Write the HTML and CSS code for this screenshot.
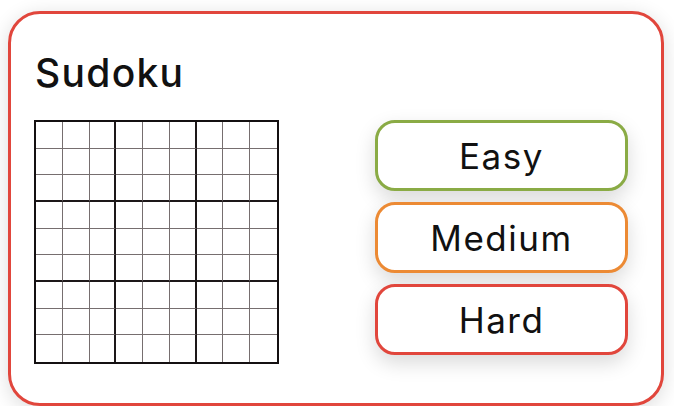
FILE: index.html
```html
<!DOCTYPE html>
<html>
<head>
<meta charset="utf-8">
<link rel="stylesheet" href="styles.css">
</head>
<body>
<div class="card">
  <h1 class="title">Sudoku</h1>
  <div class="content">
    <div class="board" id="board">
      <div></div><div></div><div></div><div></div><div></div><div></div><div></div><div></div><div></div>
      <div></div><div></div><div></div><div></div><div></div><div></div><div></div><div></div><div></div>
      <div></div><div></div><div></div><div></div><div></div><div></div><div></div><div></div><div></div>
      <div></div><div></div><div></div><div></div><div></div><div></div><div></div><div></div><div></div>
      <div></div><div></div><div></div><div></div><div></div><div></div><div></div><div></div><div></div>
      <div></div><div></div><div></div><div></div><div></div><div></div><div></div><div></div><div></div>
      <div></div><div></div><div></div><div></div><div></div><div></div><div></div><div></div><div></div>
      <div></div><div></div><div></div><div></div><div></div><div></div><div></div><div></div><div></div>
      <div></div><div></div><div></div><div></div><div></div><div></div><div></div><div></div><div></div>
    </div>
    <div class="levels">
      <button class="level easy">Easy</button>
      <button class="level medium">Medium</button>
      <button class="level hard">Hard</button>
    </div>
  </div>
</div>
</body>
</html>
```

FILE: styles.css
```css
html, body {
  margin: 0;
  padding: 0;
  background: #ffffff;
}

body {
  font-family: Inter, "Noto Sans", sans-serif;
  color: #111111;
}

.card {
  box-sizing: border-box;
  width: 656px;
  height: 395px;
  margin: 11px 0 0 8px;
  border: 3px solid #e1463c;
  border-radius: 32px;
  background: #ffffff;
  box-shadow: 0 4px 20px rgba(0, 0, 0, 0.14);
  padding: 35px 33px 0 23px;
}

.title {
  margin: 0;
  font-size: 39px;
  line-height: 48px;
  font-weight: 500;
  letter-spacing: 1.3px;
  padding-left: 1px;
}

.content {
  display: flex;
  justify-content: space-between;
  align-items: flex-start;
  margin-top: 23px;
}

.board {
  box-sizing: border-box;
  width: 245px;
  height: 244px;
  border: 2px solid #141011;
  display: grid;
  grid-template-columns: repeat(9, 1fr);
  grid-template-rows: repeat(9, 1fr);
}

.board div {
  border-right: 1px solid #766e6f;
  border-bottom: 1px solid #766e6f;
}

.board div:nth-child(9n) {
  border-right: none;
}

.board div:nth-child(3n):not(:nth-child(9n)) {
  border-right: 2px solid #1d1819;
}

.board div:nth-child(n+19):nth-child(-n+27),
.board div:nth-child(n+46):nth-child(-n+54) {
  border-bottom: 2px solid #1d1819;
}

.board div:nth-child(n+73) {
  border-bottom: none;
}

.levels {
  display: flex;
  flex-direction: column;
  gap: 11px;
}

.level {
  box-sizing: border-box;
  width: 253px;
  height: 71px;
  border: 3px solid;
  border-radius: 20px;
  background: #ffffff;
  font-family: Inter, "Noto Sans", sans-serif;
  font-size: 35px;
  font-weight: 400;
  letter-spacing: 1.5px;
  color: #111111;
  padding: 0;
  box-shadow: 0 8px 20px rgba(0, 0, 0, 0.15);
}

.easy {
  border-color: #8aab45;
}

.medium {
  border-color: #ec8a34;
}

.hard {
  border-color: #e1463c;
}
```
